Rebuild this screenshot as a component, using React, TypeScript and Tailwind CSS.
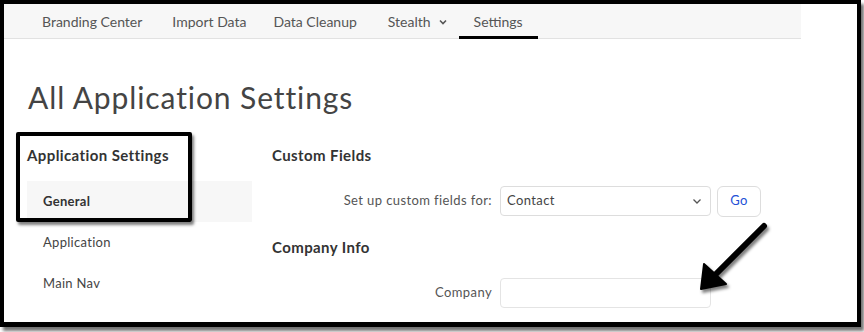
import React from "react";

export default function App() {
  const font = { fontFamily: "Lato, 'Open Sans', 'Liberation Sans', sans-serif" };
  return (
    <div className="w-[864px] h-[332px] bg-white overflow-hidden relative" style={font}>
      <div className="w-[861px] h-[327px] border-[4px] border-black border-b-[5px] bg-white shadow-[3px_4px_3px_rgba(0,0,0,0.55)] flex flex-col overflow-hidden relative">
        {/* top nav */}
        <div className="w-[797px] h-[35px] bg-[#f7f7f7] border-b border-[#e2e2e2] flex items-stretch text-[14px] text-[#555]">
          <div className="pl-[38px] flex items-center h-full">Branding Center</div>
          <div className="pl-[30px] flex items-center h-full">Import Data</div>
          <div className="pl-[27px] flex items-center h-full">Data Cleanup</div>
          <div className="pl-[31px] flex items-center h-full gap-[7px]">
            Stealth
            <svg width="10" height="10" viewBox="0 0 10 10" className="mt-[1px]">
              <path d="M2 3.5 L5 6.5 L8 3.5" fill="none" stroke="#555" strokeWidth="1.6" />
            </svg>
          </div>
          <div className="ml-[11px] px-[15px] flex items-center h-full relative">
            Settings
            <div className="absolute left-0 right-0 bottom-[-1px] h-[3px] bg-black" />
          </div>
        </div>

        {/* content */}
        <div className="pl-[24px] pt-[40px]">
          <div className="h-[36px] leading-[36px] text-[30px] tracking-[0.9px] text-[#444]">All Application Settings</div>
          <div className="flex mt-[30px]">
            {/* sidebar */}
            <div className="w-[225px] -ml-[1px]">
              <div className="h-[20px] leading-[20px] text-[15px] font-bold tracking-[0.4px] text-[#333]">Application Settings</div>
              <div className="mt-[16px] flex flex-col text-[13px] tracking-[0.3px] text-[#444]">
                <div className="h-[41px] bg-[#f7f7f7] pl-[16px] flex items-center font-bold text-[#333]">General</div>
                <div className="h-[41px] pl-[16px] flex items-center">Application</div>
                <div className="h-[41px] pl-[16px] flex items-center">Main Nav</div>
              </div>
            </div>
            {/* main */}
            <div className="ml-[20px] flex flex-col">
              <div className="h-[20px] leading-[20px] text-[15px] font-bold tracking-[0.4px] text-[#333]">Custom Fields</div>
              <div className="mt-[21px] flex items-center h-[30px] text-[13px] tracking-[0.4px]">
                <div className="w-[220px] text-right text-[#555]">Set up custom fields for:</div>
                <div className="ml-[8px] w-[211px] h-[30px] border border-[#ddd] rounded-[4px] flex items-center justify-between pl-[6px] pr-[7px] text-[#444]">
                  <span>Contact</span>
                  <svg width="12" height="12" viewBox="0 0 12 12">
                    <path d="M2.5 4.5 L6 8 L9.5 4.5" fill="none" stroke="#555" strokeWidth="1.3" />
                  </svg>
                </div>
                <div className="ml-[6px] w-[44px] h-[31px] border border-[#ddd] rounded-[6px] flex items-center justify-center text-[#2350d6]">Go</div>
              </div>
              <div className="mt-[21px] h-[20px] leading-[20px] text-[15px] font-bold tracking-[0.4px] text-[#333]">Company Info</div>
              <div className="mt-[21px] flex items-center h-[30px] text-[13px] tracking-[0.4px]">
                <div className="w-[220px] text-right text-[#555]">Company</div>
                <div className="ml-[8px] w-[211px] h-[30px] border border-[#e4e4e4] rounded-[4px]" />
              </div>
            </div>
          </div>
        </div>
      </div>

      {/* annotation rectangle */}
      <div className="absolute left-[16px] top-[132px] w-[176px] h-[90px] border-[4px] border-black rounded-[2px] shadow-[2px_3px_3px_rgba(0,0,0,0.5)]" />

      {/* annotation arrow */}
      <svg className="absolute left-0 top-0" width="864" height="332" viewBox="0 0 864 332">
        <defs>
          <filter id="sh" x="-20%" y="-20%" width="140%" height="140%">
            <feDropShadow dx="2" dy="3" stdDeviation="1.5" floodColor="#000" floodOpacity="0.5" />
          </filter>
        </defs>
        <g filter="url(#sh)">
          <line x1="764" y1="226" x2="712" y2="278" stroke="#000" strokeWidth="6" strokeLinecap="round" />
          <polygon points="701,289 704,264 726,284" fill="#000" stroke="#000" strokeWidth="2" strokeLinejoin="round" />
        </g>
      </svg>
    </div>
  );
}
